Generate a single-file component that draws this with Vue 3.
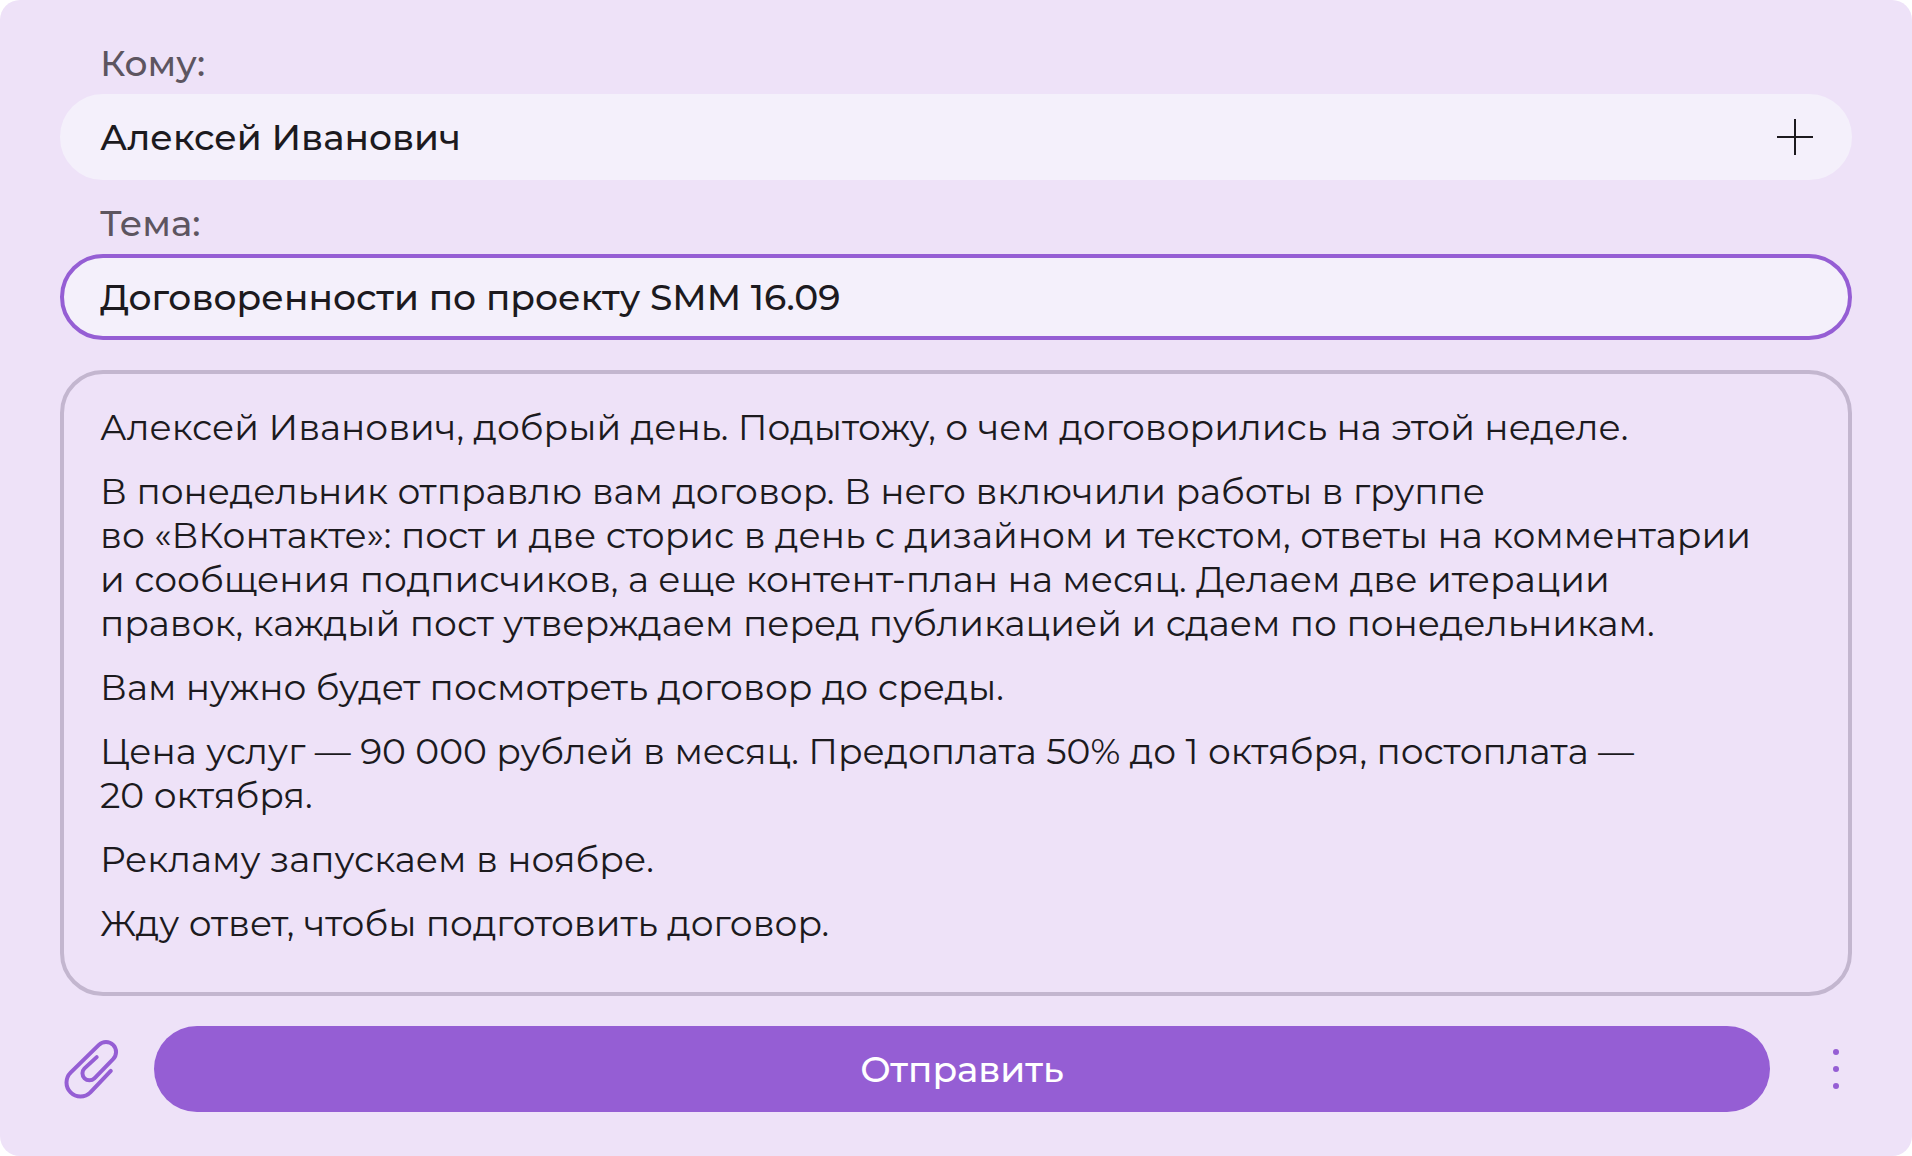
<script setup>
import { ref } from 'vue'

const recipient = ref('Алексей Иванович')
const subject = ref('Договоренности по проекту SMM 16.09')

const paragraphs = [
  'Алексей Иванович, добрый день. Подытожу, о чем договорились на этой неделе.',
  'В понедельник отправлю вам договор. В него включили работы в группе\nво «ВКонтакте»: пост и две сторис в день с дизайном и текстом, ответы на комментарии\nи сообщения подписчиков, а еще контент-план на месяц. Делаем две итерации\nправок, каждый пост утверждаем перед публикацией и сдаем по понедельникам.',
  'Вам нужно будет посмотреть договор до среды.',
  'Цена услуг — 90 000 рублей в месяц. Предоплата 50% до 1 октября, постоплата —\n20 октября.',
  'Рекламу запускаем в ноябре.',
  'Жду ответ, чтобы подготовить договор.',
]
</script>

<template>
  <form class="composer" @submit.prevent>
    <label class="label" for="recipient">Кому:</label>
    <div class="field">
      <input id="recipient" v-model="recipient" class="input" type="text" />
      <button class="icon-button add" type="button" aria-label="Добавить получателя">
        <svg width="36" height="36" viewBox="0 0 36 36" fill="none" stroke="currentColor" stroke-width="2">
          <path d="M18 0V36M0 18H36" />
        </svg>
      </button>
    </div>

    <label class="label second" for="subject">Тема:</label>
    <div class="field active">
      <input id="subject" v-model="subject" class="input" type="text" />
    </div>

    <div class="message" contenteditable="true" spellcheck="false" role="textbox" aria-multiline="true" aria-label="Текст письма">
      <p v-for="(text, i) in paragraphs" :key="i">{{ text }}</p>
    </div>

    <div class="actions">
      <button class="icon-button attach" type="button" aria-label="Прикрепить файл">
        <svg width="62" height="66" viewBox="0 0 62 66" fill="none" stroke="currentColor" stroke-width="4" stroke-linecap="round" stroke-linejoin="round">
          <path d="M50.8 34.9L30.4 56.4A14 14 0 0 1 10.6 36.6L38.9 8.9A10 10 0 0 1 53.1 23.1L34.4 42.3A7 7 0 0 1 24.5 32.4L36.7 21.1" />
        </svg>
      </button>
      <button class="send" type="submit">Отправить</button>
      <button class="icon-button more" type="button" aria-label="Ещё">
        <svg width="32" height="40" viewBox="0 0 32 40" fill="currentColor">
          <circle cx="16" cy="3" r="3" />
          <circle cx="16" cy="20" r="3" />
          <circle cx="16" cy="37" r="3" />
        </svg>
      </button>
    </div>
  </form>
</template>

<style>
body {
  margin: 0;
  background: #fff;
}
</style>

<style scoped>
.composer {
  box-sizing: border-box;
  display: flex;
  flex-direction: column;
  min-height: 100vh;
  padding: 41px 60px 44px;
  border-radius: 20px;
  background: #eee2f8;
  color: #1c1a1e;
  font-family: Montserrat, Inter, sans-serif;
  font-size: 36px;
  line-height: 44px;
}

.label {
  align-self: flex-start;
  margin: 0 40px 9px;
  color: #5d5560;
  font-weight: 500;
}

.label.second {
  margin-top: 21px;
}

.field {
  box-sizing: border-box;
  display: flex;
  align-items: center;
  height: 86px;
  padding: 0 35px 0 36px;
  border: 4px solid #f4f0fb;
  border-radius: 43px;
  background: #f4f0fb;
}

.field.active {
  border-color: #955ed4;
}

.input {
  flex: 1;
  min-width: 0;
  height: 44px;
  padding: 0;
  border: 0;
  outline: 0;
  background: none;
  color: inherit;
  font: inherit;
  font-weight: 500;
}

.icon-button {
  display: flex;
  flex: none;
  align-items: center;
  justify-content: center;
  padding: 0;
  border: 0;
  background: none;
  color: #955ed4;
  cursor: pointer;
}

.add {
  color: #1c1a1e;
}

.message {
  flex: 1;
  margin: 30px 0;
  padding: 31px 36px;
  border: 4px solid #c3b6cf;
  border-radius: 43px;
  outline: 0;
}

.message p {
  margin: 0 0 20px;
  white-space: pre-line;
}

.message p:last-child {
  margin-bottom: 0;
}

.actions {
  display: flex;
  align-items: center;
}

.send {
  flex: 1;
  height: 86px;
  margin: 0 50px 0 32px;
  padding: 0;
  border: 0;
  border-radius: 43px;
  background: #955ed4;
  color: #fff;
  font: inherit;
  font-weight: 500;
  cursor: pointer;
}
</style>
